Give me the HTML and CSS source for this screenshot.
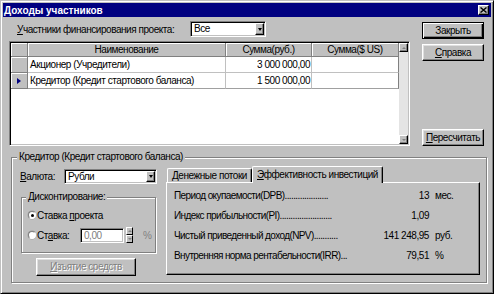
FILE: index.html
```html
<!doctype html>
<html>

<head>
    <meta charset="utf-8">
    <title>Доходы участников</title>
    <link rel="stylesheet" href="styles.css">
</head>

<body>
<div class="window">
    <div class="caption">
        <span class="caption-title">Доходы участников</span>
        <span class="caption-close">
            <svg width="7" height="6" viewBox="0 0 7 6"><path d="M0.5 0.5 L6.5 5.5 M6.5 0.5 L0.5 5.5" stroke="#000" stroke-width="1.4"/></svg>
        </span>
    </div>
    <div class="client">
        <div class="top">
            <div class="top-left">
                <div class="filter-row">
                    <span class="filter-label"><u>У</u>частники финансирования проекта:</span>
                    <div class="combo combo-filter">
                        <span class="combo-text">Все</span>
                        <span class="combo-btn"><i class="arrow-down"></i></span>
                    </div>
                </div>
                <div class="grid">
                    <div class="grid-data">
                        <div class="grid-row grid-head">
                            <div class="cell fixed"></div>
                            <div class="cell fixed">Наименование</div>
                            <div class="cell fixed">Сумма(руб.)</div>
                            <div class="cell fixed">Сумма($ US)</div>
                        </div>
                        <div class="grid-row">
                            <div class="cell fixed"></div>
                            <div class="cell">Акционер (Учредители)</div>
                            <div class="cell num">3 000 000,00</div>
                            <div class="cell last"></div>
                        </div>
                        <div class="grid-row row-last">
                            <div class="cell fixed"><i class="indicator"></i></div>
                            <div class="cell">Кредитор (Кредит стартового баланса)</div>
                            <div class="cell num">1 500 000,00</div>
                            <div class="cell last"></div>
                        </div>
                    </div>
                    <div class="vscroll">
                        <div class="sb-btn"><i class="sb-up"></i></div>
                        <div class="sb-track"></div>
                        <div class="sb-btn"><i class="sb-down"></i></div>
                    </div>
                </div>
            </div>
            <div class="top-right">
                <div class="btn btn-default">Закрыть</div>
                <div class="btn btn-help"><u>С</u>правка</div>
                <div class="btn btn-recalc"><u>П</u>ересчитать</div>
            </div>
        </div>

        <div class="group group-main">
            <div class="group-title">Кредитор (Кредит стартового баланса)</div>
            <div class="group-body">
                <div class="left-col">
                    <div class="currency-row">
                        <span class="currency-label"><u>В</u>алюта:</span>
                        <div class="combo combo-currency">
                            <span class="combo-text">Рубли</span>
                            <span class="combo-btn"><i class="arrow-down"></i></span>
                        </div>
                    </div>
                    <div class="group group-disc">
                        <div class="group-title disc-title">Дисконтирование:</div>
                        <div class="radio-row">
                            <span class="radio checked"></span>
                            <span>Ставка <u>п</u>роекта</span>
                        </div>
                        <div class="radio-row radio-row2">
                            <span class="radio"></span>
                            <span class="rate-label">Ст<u>а</u>вка:</span>
                            <div class="edit">0,00</div>
                            <div class="spin">
                                <div class="spin-btn"><i class="sp-up"></i></div>
                                <div class="spin-btn"><i class="sp-down"></i></div>
                            </div>
                            <span class="percent">%</span>
                        </div>
                    </div>
                    <div class="btn btn-disabled btn-withdraw"><u>И</u>зъятие средств</div>
                </div>

                <div class="tabs">
                    <div class="tab-strip">
                        <div class="tab tab-cash">Денежные потоки</div>
                        <div class="tab tab-active"><u>Э</u>ффективность инвестиций</div>
                    </div>
                    <div class="tab-panel">
                        <div class="metric">
                            <span class="metric-name">Период окупаемости(DPB)....................</span>
                            <span class="metric-value">13</span>
                            <span class="metric-unit">мес.</span>
                        </div>
                        <div class="metric">
                            <span class="metric-name">Индекс прибыльности(PI)........................</span>
                            <span class="metric-value">1,09</span>
                            <span class="metric-unit"></span>
                        </div>
                        <div class="metric">
                            <span class="metric-name">Чистый приведенный доход(NPV)...........</span>
                            <span class="metric-value">141 248,95</span>
                            <span class="metric-unit">руб.</span>
                        </div>
                        <div class="metric">
                            <span class="metric-name">Внутренняя норма рентабельности(IRR)...</span>
                            <span class="metric-value">79,51</span>
                            <span class="metric-unit">%</span>
                        </div>
                    </div>
                </div>
            </div>
        </div>
    </div>
</div>
</body>

</html>
```

FILE: styles.css
```css
* {
    margin: 0;
    padding: 0;
    box-sizing: border-box;
}

body {
    background: #c0c0c0;
    font: 10px "Liberation Sans", Arial, sans-serif;
    letter-spacing: -0.45px;
    color: #000;
}

u {
    text-decoration: underline;
}

.window {
    width: 494px;
    height: 294px;
    background: #c0c0c0;
    border: 1px solid;
    border-color: #c0c0c0 #000 #000 #c0c0c0;
    box-shadow: inset 1px 1px 0 #fff, inset -1px -1px 0 #808080;
    padding: 2px;
}

/* заголовок окна */
.caption {
    height: 14px;
    background: #000080;
    color: #fff;
    display: flex;
    align-items: center;
    justify-content: space-between;
    padding: 0 2px 0 1px;
}

.caption-title {
    font-weight: bold;
    letter-spacing: 0;
}

.caption-close {
    width: 11px;
    height: 10px;
    background: #c0c0c0;
    border: 1px solid;
    border-color: #fff #000 #000 #fff;
    box-shadow: inset -1px -1px 0 #808080;
    display: flex;
    align-items: center;
    justify-content: center;
}

.caption-close svg {
    display: block;
}

.client {
    padding-top: 4px;
}

.top {
    display: flex;
    margin-left: 6px;
}

.top-left {
    width: 401px;
}

.filter-row {
    display: flex;
    align-items: center;
    height: 16px;
    padding-left: 8px;
}

.filter-label {
    width: 173px;
}

/* комбобоксы */
.combo {
    display: flex;
    height: 16px;
    background: #fff;
    border: 1px solid;
    border-color: #808080 #fff #fff #808080;
    box-shadow: inset 1px 1px 0 #000, inset -1px -1px 0 #c0c0c0;
    padding: 2px;
}

.combo-filter {
    width: 76px;
}

.combo-currency {
    width: 93px;
    height: 15px;
}

.combo-text {
    flex: 1;
    line-height: 10px;
    padding-left: 1px;
}

.combo-btn {
    width: 9px;
    margin: -1px -1px -1px 0;
    background: #c0c0c0;
    border: 1px solid;
    border-color: #fff #000 #000 #fff;
    box-shadow: inset -1px -1px 0 #808080;
    display: flex;
    align-items: center;
    justify-content: center;
}

.arrow-down {
    width: 0;
    height: 0;
    border-left: 2.5px solid transparent;
    border-right: 2.5px solid transparent;
    border-top: 3px solid #000;
}

/* таблица */
.grid {
    margin-top: 4px;
    height: 105px;
    display: flex;
    border: 1px solid;
    border-color: #808080 #fff #fff #808080;
    box-shadow: inset 1px 1px 0 #000, inset -1px -1px 0 #c0c0c0;
    padding: 1px;
}

.grid-data {
    flex: 1;
    background: #fff;
}

.grid-row {
    display: grid;
    grid-template-columns: 17px 198px 86px 87px;
    height: 16px;
}

.grid-head {
    height: 14px;
}

.cell {
    border-right: 1px solid #c0c0c0;
    border-bottom: 1px solid #c0c0c0;
    padding: 0 2px;
    line-height: 15px;
    white-space: nowrap;
    overflow: hidden;
}

.grid-head .cell {
    line-height: 13px;
    text-align: center;
}

.cell.fixed {
    background: #c0c0c0;
    border-right-color: #808080;
    border-bottom-color: #808080;
    box-shadow: inset 1px 1px 0 #fff;
    display: flex;
    align-items: center;
    justify-content: center;
}

.cell.num {
    text-align: right;
    padding-right: 1px;
}

.cell.last {
    border-right-color: #808080;
}

.row-last .cell {
    border-bottom-color: #a0a0a0;
}

.row-last .cell.fixed {
    border-bottom-color: #808080;
}

.indicator {
    width: 0;
    height: 0;
    margin-left: -1px;
    border-top: 3.5px solid transparent;
    border-bottom: 3.5px solid transparent;
    border-left: 4px solid #000080;
}

.vscroll {
    width: 9px;
    display: flex;
    flex-direction: column;
}

.sb-btn {
    width: 9px;
    height: 9px;
    background: #c0c0c0;
    border: 1px solid;
    border-color: #fff #000 #000 #fff;
    box-shadow: inset -1px -1px 0 #808080;
    display: flex;
    align-items: center;
    justify-content: center;
}

.sb-track {
    flex: 1;
    background: #e4e4e4;
}

.sb-up,
.sp-up {
    width: 0;
    height: 0;
    border-left: 2px solid transparent;
    border-right: 2px solid transparent;
    border-bottom: 2px solid #808080;
}

.sb-down,
.sp-down {
    width: 0;
    height: 0;
    border-left: 2px solid transparent;
    border-right: 2px solid transparent;
    border-top: 2px solid #808080;
}

/* кнопки */
.top-right {
    margin-left: 12px;
    width: 62px;
    height: 125px;
    padding-top: 1px;
    display: flex;
    flex-direction: column;
}

.btn {
    height: 17px;
    background: #c0c0c0;
    border: 1px solid;
    border-color: #fff #000 #000 #fff;
    box-shadow: inset -1px -1px 0 #808080, inset 1px 1px 0 #dfdfdf;
    text-align: center;
    line-height: 15px;
    white-space: nowrap;
}

.btn-default {
    border: 1px solid #000;
    box-shadow: inset 1px 1px 0 #fff, inset -1px -1px 0 #000, inset -2px -2px 0 #808080;
}

.btn-help {
    margin-top: 5px;
}

.btn-recalc {
    margin-top: auto;
}

.btn-disabled {
    color: #808080;
    text-shadow: 1px 1px 0 #fff;
}

/* группы */
.group {
    border: 1px solid #808080;
    box-shadow: inset 1px 1px 0 #fff, 1px 1px 0 #fff;
}

.group-main {
    margin: 11px 0 0 8px;
    width: 476px;
    height: 126px;
}

.group-title {
    width: fit-content;
    margin: -7px 0 0 5px;
    padding: 0 2px;
    line-height: 12px;
    background: #c0c0c0;
}

.group-body {
    display: flex;
    padding: 3px 0 0 8px;
}

.left-col {
    width: 137px;
    margin-top: 3px;
}

.currency-row {
    display: flex;
    align-items: center;
    height: 15px;
}

.currency-label {
    width: 44px;
}

.group-disc {
    margin: 13px 0 0 1px;
    width: 135px;
    height: 56px;
}

.disc-title {
    margin-left: 4px;
}

.radio-row {
    display: flex;
    align-items: center;
    height: 14px;
    margin-top: 5px;
    padding-left: 6px;
}

.radio-row2 {
    height: 16px;
}

.radio {
    width: 8px;
    height: 8px;
    margin-right: 1px;
    border-radius: 50%;
    background: #fff;
    border: 1px solid;
    border-color: #808080 #fff #fff #808080;
    box-shadow: 0 0 0 0.5px #a0a0a0;
    display: flex;
    align-items: center;
    justify-content: center;
}

.radio.checked::after {
    content: "";
    width: 3px;
    height: 3px;
    border-radius: 50%;
    background: #000;
}

.rate-label {
    width: 43px;
}

.edit {
    width: 44px;
    height: 15px;
    background: #fff;
    color: #808080;
    border: 1px solid;
    border-color: #808080 #fff #fff #808080;
    box-shadow: inset 1px 1px 0 #000, inset -1px -1px 0 #c0c0c0;
    padding-left: 3px;
    line-height: 13px;
}

.spin {
    width: 7px;
    height: 16px;
    margin-left: 2px;
    display: flex;
    flex-direction: column;
}

.spin-btn {
    flex: 1;
    background: #c0c0c0;
    border: 1px solid;
    border-color: #fff #000 #000 #fff;
    display: flex;
    align-items: center;
    justify-content: center;
}

.percent {
    margin-left: 10px;
    color: #808080;
}

.btn-withdraw {
    width: 100px;
    height: 18px;
    line-height: 16px;
    margin: 5px 0 0 16px;
}

/* вкладки */
.tabs {
    width: 314px;
    margin-left: 9px;
}

.tab-strip {
    display: flex;
    height: 16px;
    padding-left: 1px;
}

.tab {
    height: 14px;
    margin-top: 2px;
    line-height: 13px;
    text-align: center;
    background: #c0c0c0;
    border-top: 1px solid #fff;
    border-left: 1px solid #fff;
    border-right: 1px solid #000;
    box-shadow: inset -1px 0 0 #808080;
    border-radius: 2px 2px 0 0;
}

.tab-cash {
    width: 85px;
}

.tab-active {
    position: relative;
    z-index: 1;
    width: 131px;
    height: 17px;
    margin-top: 0;
    line-height: 15px;
}

.tab-panel {
    height: 93px;
    border: 1px solid;
    border-color: #fff #000 #000 #fff;
    box-shadow: inset -1px -1px 0 #808080;
    padding: 2px 0 0 7px;
}

.metric {
    display: grid;
    grid-template-columns: 209px 46px 43px;
    align-items: center;
    height: 20px;
    white-space: nowrap;
}

.metric-name {
    letter-spacing: -0.6px;
}

.metric-value {
    text-align: right;
}

.metric-unit {
    padding-left: 6px;
}
```
